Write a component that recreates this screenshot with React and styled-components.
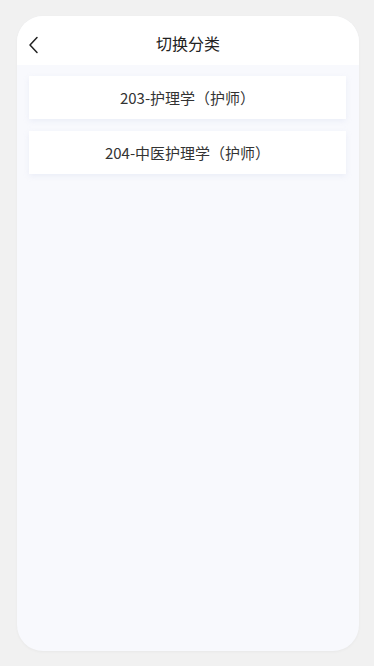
import styled, { createGlobalStyle } from "styled-components";

const Global = createGlobalStyle`
  html, body {
    margin: 0;
    padding: 0;
    background: #f1f1f1;
    font-family: "Noto Sans CJK SC", "Noto Sans", sans-serif;
  }
`;

const Page = styled.div`
  padding: 16px 15px 15px 17px;
  height: 666px;
  box-sizing: border-box;
`;

const Card = styled.div`
  height: 100%;
  background: #f8f9fd;
  border-radius: 26px;
  overflow: hidden;
  display: flex;
  flex-direction: column;
  box-shadow: 0 1px 3px rgba(0, 0, 0, 0.04);
`;

const Header = styled.div`
  height: 49px;
  box-sizing: border-box;
  padding-top: 4px;
  background: #ffffff;
  display: flex;
  align-items: center;
  justify-content: center;
  position: relative;
  flex-shrink: 0;
`;

const Back = styled.button`
  position: absolute;
  left: 7px;
  top: 16px;
  border: none;
  background: none;
  padding: 4px;
  display: flex;
`;

const Title = styled.div`
  font-size: 16px;
  color: #222;
`;

const List = styled.div`
  display: flex;
  flex-direction: column;
  gap: 12px;
  padding: 11px 13px 0 12px;
`;

const Item = styled.div`
  height: 43px;
  background: #ffffff;
  display: flex;
  align-items: center;
  justify-content: center;
  font-size: 15px;
  color: #333;
  box-shadow: 0 2px 6px rgba(180, 190, 220, 0.18);
`;

const items = ["203-护理学（护师）", "204-中医护理学（护师）"];

export default function App() {
  return (
    <>
      <Global />
      <Page>
        <Card>
          <Header>
            <Back>
              <svg width="12" height="18" viewBox="0 0 12 18">
                <path d="M9 1.5 L2 9 L9 16.5" fill="none" stroke="#222" strokeWidth="1.5" strokeLinecap="round" strokeLinejoin="round" />
              </svg>
            </Back>
            <Title>切换分类</Title>
          </Header>
          <List>
            {items.map((t) => (
              <Item key={t}>{t}</Item>
            ))}
          </List>
        </Card>
      </Page>
    </>
  );
}
